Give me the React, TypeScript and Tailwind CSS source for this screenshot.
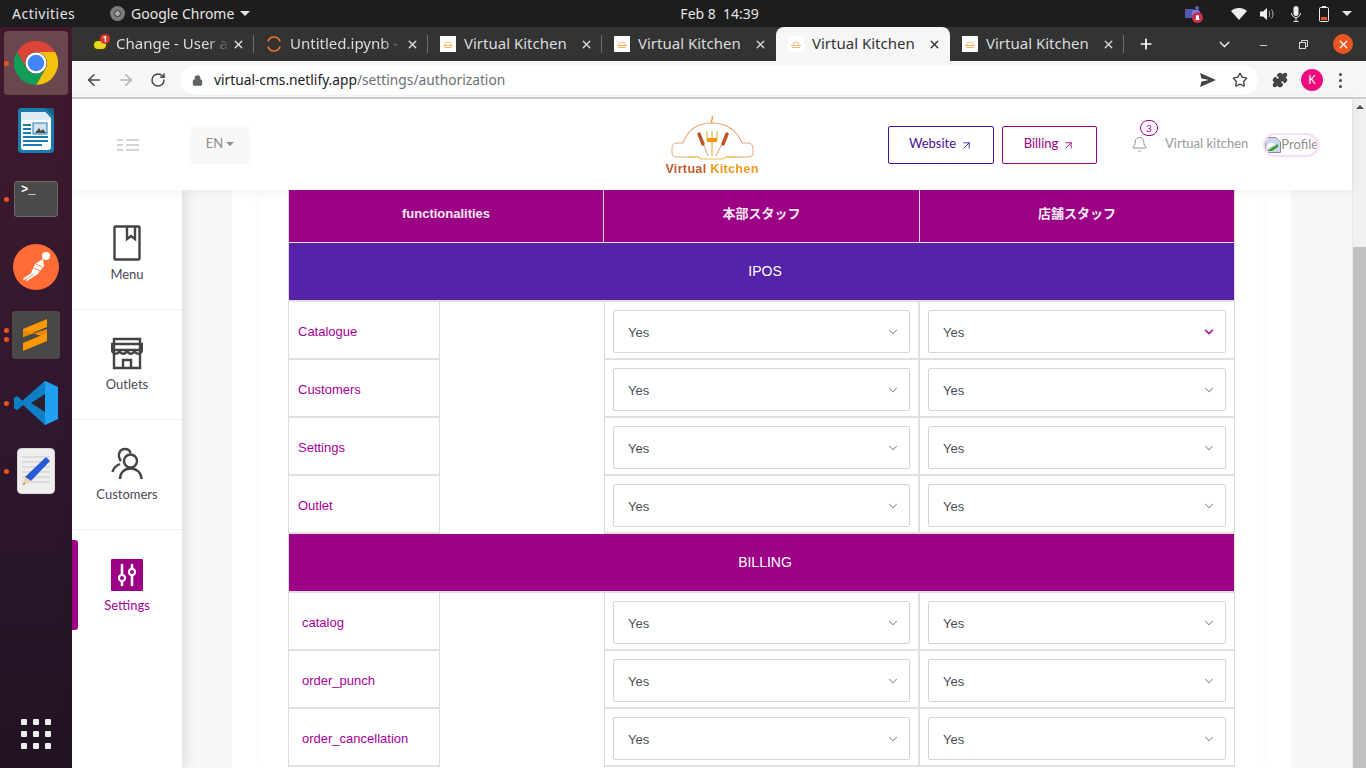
import React from "react";
import { ArrowLeft, ArrowRight, RotateCw, Star, Plus, X, ChevronDown, Minus, Bell, ArrowUpRight, Lock, Puzzle } from "lucide-react";

function ChromeLogo({ size = 44 }: { size?: number }) {
  return (
    <svg width={size} height={size} viewBox="0 0 48 48">
      <path d="M3.2 12A24 24 0 0 1 44.8 12L24 12A12 12 0 0 0 13.6 30Z" fill="#db4437" />
      <path d="M44.8 12A24 24 0 0 1 24 48L34.4 30A12 12 0 0 0 24 12Z" fill="#f4c20d" />
      <path d="M24 48A24 24 0 0 1 3.2 12L13.6 30A12 12 0 0 0 34.4 30Z" fill="#0f9d58" />
      <circle cx="24" cy="24" r="11.5" fill="#fff" />
      <circle cx="24" cy="24" r="9" fill="#4285f4" />
    </svg>
  );
}

function Dot({ top }: { top: number }) {
  return <span className="absolute left-[4px] h-[5px] w-[5px] rounded-full bg-[#e95420]" style={{ top }} />;
}

function Dock() {
  return (
    <div className="flex h-full w-[72px] shrink-0 flex-col items-center bg-gradient-to-b from-[#41192c] via-[#31182f] to-[#211322] pt-[2px]">
      <div className="relative flex h-[68px] w-full items-center justify-center">
        <div className="flex h-[64px] w-[64px] items-center justify-center rounded-[4px] bg-[#6a474e]">
          <ChromeLogo />
        </div>
        <Dot top={32} />
      </div>
      <div className="flex h-[68px] w-full items-center justify-center">
        <svg width="38" height="46" viewBox="0 0 38 46">
          <path d="M4 0H29L37 8V41a4 4 0 0 1-4 4H5a4 4 0 0 1-4-4V3a3 3 0 0 1 3-3Z" fill="#1a7cac" />
          <path d="M4 4H28L34 10V39a3 3 0 0 1-3 3H7a3 3 0 0 1-3-3Z" fill="#fff" />
          <path d="M28 0H34a3 3 0 0 1 3 3V9Z" fill="#14628c" />
          <path d="M4 4H28L32 8V12H4Z" fill="#dcebf3" />
          <rect x="6" y="16" width="8" height="2" fill="#1a7cac" />
          <rect x="6" y="20" width="8" height="2" fill="#1a7cac" />
          <rect x="6" y="24" width="8" height="2" fill="#1a7cac" />
          <rect x="16" y="15" width="14" height="11" fill="#cfe2ee" stroke="#1a7cac" />
          <path d="M18 25l4-5 2 3 2-2 3 4Z" fill="#4b4b4b" />
          <rect x="6" y="28" width="25" height="2" fill="#1a7cac" />
          <rect x="6" y="32" width="25" height="2" fill="#1a7cac" />
          <rect x="6" y="36" width="19" height="2" fill="#1a7cac" />
        </svg>
      </div>
      <div className="relative flex h-[68px] w-full items-center justify-center">
        <div className="h-[36px] w-[44px] rounded-[3px] border border-[#6b6b6b] bg-[#4a4a4a] pl-[6px] pt-[1px] font-['Liberation_Mono',monospace] text-[12px] font-bold leading-[14px] text-white">
          &gt;_
        </div>
        <Dot top={32} />
      </div>
      <div className="flex h-[68px] w-full items-center justify-center">
        <svg width="46" height="46" viewBox="0 0 46 46">
          <circle cx="23" cy="23" r="23" fill="#ff6c37" />
          <circle cx="33" cy="12" r="4" fill="#fff" />
          <path d="M30 15L22 20L18 29L24 31L31 22Z" fill="#fff" />
          <path d="M20 29L11 35M23 30L14 36" stroke="#fff" strokeWidth="2" strokeLinecap="round" />
          <path d="M21 24L27 27M23 20L29 23" stroke="#ff6c37" strokeWidth="0.9" fill="none" />
        </svg>
      </div>
      <div className="relative flex h-[68px] w-full items-center justify-center">
        <div className="flex h-[48px] w-[48px] items-center justify-center rounded-[3px] bg-[#484848]">
          <svg width="26" height="32" viewBox="0 0 26 32">
            <path d="M0 10L24 0V8L0 18Z" fill="#ff9800" />
            <path d="M0 11L24 19V10L0 18Z" fill="#e88a00" />
            <path d="M0 24L24 14V22L0 32Z" fill="#ff9800" />
          </svg>
        </div>
        <Dot top={27} />
        <Dot top={36} />
      </div>
      <div className="relative flex h-[68px] w-full items-center justify-center">
        <svg width="44" height="44" viewBox="0 0 44 44">
          <path d="M31 0L44 6V38L31 44L9 24L3 29L0 27V17L3 15L9 20Z" fill="#0e7fc7" />
          <path d="M31 0L44 6V38L31 44Z" fill="#1fa0f0" />
          <path d="M31 13V31L17 22Z" fill="#2f2030" />
          <path d="M0 27L3 29L31 6V0Z" fill="#0e7fc7" />
        </svg>
        <Dot top={32} />
      </div>
      <div className="relative flex h-[68px] w-full items-center justify-center">
        <svg width="38" height="46" viewBox="0 0 38 46">
          <rect x="0.5" y="0.5" width="37" height="45" rx="4" fill="#eeeeee" stroke="#d5d5d5" />
          <path d="M5 9H33M5 14H33M5 19H33M5 24H33M5 29H33M5 34H33" stroke="#c9c9c9" strokeWidth="1" />
          <path d="M29 9L33 13L14 33L8 29Z" fill="#2a5bd7" />
          <path d="M8 29L14 33L6 37Z" fill="#f2d2a9" />
          <path d="M6 36L8 35L7 37Z" fill="#333" />
        </svg>
        <Dot top={32} />
      </div>
      <div className="mb-[19px] mt-auto grid grid-cols-3 gap-[6px]">
        {Array.from({ length: 9 }).map((_, i) => (
          <span key={i} className="h-[6px] w-[6px] rounded-[1px] bg-[#eeeeee]" />
        ))}
      </div>
    </div>
  );
}

function TopBar() {
  return (
    <div className="flex h-[27px] shrink-0 items-center bg-[#1d1d1d] font-['Noto_Sans',sans-serif] text-[14px] text-[#e6e6e6]">
      <span className="ml-[12px] w-[98px] tracking-[0.5px]">Activities</span>
      <span className="flex h-[15px] w-[15px] items-center justify-center rounded-full bg-[#7b7b7b]">
        <span className="h-[7px] w-[7px] rounded-full border border-[#333] bg-[#aaa]" />
      </span>
      <span className="ml-[6px]">Google Chrome</span>
      <span className="ml-[6px] h-0 w-0 border-x-[5px] border-t-[5px] border-x-transparent border-t-[#e6e6e6]" />
      <span className="ml-[430px] w-[79px] whitespace-nowrap">Feb 8&nbsp; 14:39</span>
      <div className="ml-auto flex items-center pr-[14px]">
        <svg width="18" height="18" viewBox="0 0 18 18" className="mr-[29px]">
          <circle cx="12" cy="3" r="2" fill="#6264a7" />
          <rect x="0" y="4" width="9" height="9" rx="1" fill="#5558af" />
          <rect x="7" y="5" width="8" height="8" rx="3" fill="#7b83eb" />
          <circle cx="12.500" cy="12.500" r="5.500" fill="#c4314b" />
          <path d="M10 15h5l-1-1v-2.500a1.500 1.500 0 0 0-3 0V14Z" fill="#fff" />
        </svg>
        <svg width="16" height="12" viewBox="0 0 16 12" className="mr-[13px] -ml-[1px]">
          <path d="M0 3C4-1 12-1 16 3L8 12Z" fill="#eeeeee" />
        </svg>
        <svg width="15" height="14" viewBox="0 0 15 14" className="mr-[16px]">
          <path d="M0 4.500H3L7 1V13L3 9.500H0Z" fill="#eeeeee" />
          <path d="M9 4C10 6 10 8 9 10M11.500 2.500C13.500 5.500 13.500 8.500 11.500 11.500" stroke="#bbb" fill="none" />
        </svg>
        <svg width="10" height="16" viewBox="0 0 10 16" className="mr-[18px]">
          <rect x="2.500" y="0" width="5" height="10" rx="2.500" fill="#eeeeee" />
          <path d="M0.500 7a4.500 4.500 0 0 0 9 0M5 11.500V15M2.500 15.500H7.500" stroke="#eeeeee" fill="none" />
        </svg>
        <svg width="10" height="16" viewBox="0 0 10 16" className="mr-[13px]">
          <rect x="3" y="0" width="4" height="2" fill="#eeeeee" />
          <rect x="0.500" y="1.500" width="9" height="14" rx="1" fill="none" stroke="#eeeeee" />
          <rect x="2" y="11" width="6" height="3" fill="#e95420" />
        </svg>
        <span className="h-0 w-0 border-x-[5px] border-t-[5px] border-x-transparent border-t-[#e6e6e6]" />
      </div>
    </div>
  );
}

function Favicon() {
  return (
    <span className="flex h-[16px] w-[16px] shrink-0 items-center justify-center bg-white">
      <svg width="12" height="8" viewBox="0 0 12 8">
        <path d="M3 5a3 3 0 0 1 6 0" fill="none" stroke="#eeb48c" strokeWidth="1" />
        <path d="M1 5.500H11M2 7.500H10" stroke="#f5b566" strokeWidth="1" />
      </svg>
    </span>
  );
}

function Tab({ title, icon, active, sep = true, fade }: { title: string; icon: React.ReactNode; active?: boolean; sep?: boolean; fade?: boolean }) {
  return (
    <div className={`relative flex h-[34px] w-[174px] shrink-0 items-center pl-[12px] pr-[9px] ${active ? "rounded-t-[8px] bg-[#f6f6f6] text-[#333]" : "text-[#dcdcdc]"}`}>
      {icon}
      <span className="ml-[8px] w-[114px] overflow-hidden whitespace-nowrap pb-[1px]" style={fade ? { maskImage: "linear-gradient(to right,#000 80%,transparent)", WebkitMaskImage: "linear-gradient(to right,#000 80%,transparent)" } : undefined}>
        {title}
      </span>
      <X size={13} strokeWidth={2.5} className="ml-auto" />
      {sep && <span className="absolute right-0 top-[8px] h-[18px] w-px bg-[#6c6c6c]" />}
    </div>
  );
}

function TabStrip() {
  return (
    <div className="flex h-[34px] shrink-0 items-center bg-[#333333] pl-[8px] font-['Noto_Sans',sans-serif] text-[15px]">
      <Tab
        title="Change - User au"
        fade
        icon={
          <span className="relative h-[16px] w-[16px] shrink-0">
            <span className="absolute left-0 top-[3px] h-[12px] w-[16px] rounded-full border-2 border-[#3c3c10] bg-[#e3d81a]" />
            <span className="absolute right-[-2px] top-[-2px] flex h-[10px] w-[10px] items-center justify-center rounded-full bg-[#e0352b] text-[8px] font-bold leading-none text-white">1</span>
          </span>
        }
      />
      <Tab
        title="Untitled.ipynb -"
        fade
        icon={
          <svg width="16" height="16" viewBox="0 0 16 16" className="shrink-0">
            <path d="M2 5.500C4-.5 12-.5 14 5.500M2 10.500C4 16.500 12 16.500 14 10.500" stroke="#f37726" strokeWidth="1.700" fill="none" />
          </svg>
        }
      />
      <Tab title="Virtual Kitchen" icon={<Favicon />} />
      <Tab title="Virtual Kitchen" icon={<Favicon />} sep={false} />
      <Tab title="Virtual Kitchen" icon={<Favicon />} active sep={false} />
      <Tab title="Virtual Kitchen" icon={<Favicon />} />
      <Plus size={16} strokeWidth={2.6} className="ml-[14px] text-white" />
      <ChevronDown size={17} strokeWidth={2} className="ml-[62px] text-[#dcdcdc]" />
      <Minus size={11} strokeWidth={2} className="ml-[25px] mt-[3px] text-[#dcdcdc]" />
      <svg width="9" height="9" viewBox="0 0 9 9" className="ml-[30px] text-[#dcdcdc]">
        <rect x="0.500" y="2.500" width="6" height="6" fill="none" stroke="currentColor" />
        <path d="M2.500 2V.5H8.500V6.500H7" fill="none" stroke="currentColor" />
      </svg>
      <span className="ml-[25px] flex h-[20px] w-[20px] items-center justify-center rounded-full bg-[#e95420]">
        <X size={13} strokeWidth={2.2} className="text-white" />
      </span>
    </div>
  );
}

function Toolbar() {
  return (
    <div className="flex h-[38px] shrink-0 items-center border-b-2 border-[#cfcfcf] bg-[#f6f6f6] pt-[2px] font-['Noto_Sans',sans-serif] text-[13.75px]">
      <ArrowLeft size={18} strokeWidth={2} className="ml-[13px] text-[#444]" />
      <ArrowRight size={18} strokeWidth={2} className="ml-[14px] text-[#b0b0b0]" />
      <RotateCw size={16} strokeWidth={2.2} className="ml-[15px] text-[#444]" />
      <div className="ml-[14px] flex h-[30px] w-[1078px] items-center rounded-full bg-white pl-[12px]">
        <Lock size={11} strokeWidth={2.5} className="text-[#5f6368]" fill="#5f6368" />
        <span className="ml-[11px] text-[#202124]">virtual-cms.netlify.app</span>
        <span className="text-[#6b6f73]">/settings/authorization</span>
        <svg width="16" height="14" viewBox="0 0 16 14" className="ml-auto mr-[16px] text-[#444]">
          <path d="M0 0L16 7L0 14L1.500 8.500L9 7L1.500 5.500Z" fill="currentColor" />
        </svg>
        <Star size={16} strokeWidth={2} className="mr-[10px] text-[#444]" />
      </div>
      <Puzzle size={16} strokeWidth={2} className="ml-[14px] text-[#444]" fill="#444" />
      <span className="ml-[13px] flex h-[22px] w-[22px] items-center justify-center rounded-full bg-[#ec0a7d] text-[12px] text-white">K</span>
      <span className="ml-[16px] flex flex-col gap-[3px]">
        <span className="h-[3px] w-[3px] rounded-full bg-[#444]" />
        <span className="h-[3px] w-[3px] rounded-full bg-[#444]" />
        <span className="h-[3px] w-[3px] rounded-full bg-[#444]" />
      </span>
    </div>
  );
}

function Logo() {
  return (
    <div className="flex w-[96px] flex-col items-center blur-[0.4px]">
      <svg width="96" height="46" viewBox="0 0 96 46">
        <path d="M48 1c2 3-2 4 0 7" stroke="#eda53a" strokeWidth="1.500" fill="none" />
        <path d="M19 28C24 14 35 8 48 8S72 14 78 28" stroke="#e5a47c" strokeWidth="1.200" fill="none" />
        <path d="M19 28H13C10 28 8 30 8 33V38C8 41 10 42 13 42H35M78 28H84C87 28 89 30 89 33V38C89 41 87 42 84 42H62" stroke="#e5a47c" strokeWidth="1" fill="none" />
        <path d="M24 42H34L37 44H59L62 42H74" stroke="#f2c04e" strokeWidth="1.200" fill="none" />
        <path d="M36 20L44 41M62 20L52 41" stroke="#e0a070" strokeWidth="1" />
        <path d="M35 19L39 29M63 19L59 29" stroke="#b8562a" strokeWidth="3.400" strokeLinecap="round" />
        <path d="M43 16V24C43 28 53 28 53 24V16M48 16V41" stroke="#eda53a" strokeWidth="1.100" fill="none" />
        <path d="M43 23H53V27H43Z" fill="#ef9a1a" />
      </svg>
      <div className="mt-[2px] whitespace-nowrap font-['Liberation_Sans',sans-serif] text-[12.5px] font-bold leading-[13px] tracking-[0.35px]">
        <span className="text-[#c25b2a]">Virtual </span>
        <span className="text-[#ef9a1a]">Kitchen</span>
      </div>
    </div>
  );
}

function Header() {
  return (
    <div className="relative z-20 flex h-[91px] shrink-0 items-center bg-white font-['Lato',sans-serif] shadow-[0_1px_12px_rgba(0,0,0,0.07)]">
      <svg width="22" height="12" viewBox="0 0 22 12" className="ml-[45px] text-[#a8a8a8]">
        <path d="M0 1H6M0 6H6M0 11H6M9 1H22M9 6H22M9 11H22" stroke="currentColor" strokeWidth="1" />
      </svg>
      <div className="ml-[51px] flex h-[38px] w-[60px] items-center justify-center gap-[3px] rounded-[4px] bg-[#f8f8f8] pb-[2px] text-[13px] text-[#8d8d8d]">
        EN
        <span className="h-0 w-0 border-x-[4px] border-t-[4px] border-x-transparent border-t-[#8d8d8d]" />
      </div>
      <div className="ml-[414px] mt-[2px]"><Logo /></div>
      <button className="ml-[128px] flex h-[38px] w-[106px] items-center justify-center gap-[4px] rounded-[2px] border border-[#4a0f9c] pb-[2px] text-[13px] text-[#4a0f9c]">
        Website <ArrowUpRight size={13} strokeWidth={1.6} className="mt-[3px]" />
      </button>
      <button className="ml-[8px] flex h-[38px] w-[95px] items-center justify-center gap-[4px] rounded-[2px] border border-[#9c0085] pb-[2px] text-[13px] text-[#9c0085]">
        Billing <ArrowUpRight size={13} strokeWidth={1.6} className="mt-[3px]" />
      </button>
      <div className="relative ml-[34px]">
        <Bell size={17} strokeWidth={1} className="text-[#666]" />
        <span className="absolute left-[9px] top-[-16px] flex h-[16px] w-[18px] items-center justify-center rounded-full border border-[#a7009a] bg-white text-[10px] text-[#a7009a]">3</span>
      </div>
      <span className="ml-[17px] pb-[2px] text-[13px] text-[#9a9a9a]">Virtual kitchen</span>
      <div className="ml-[15px] flex h-[24px] w-[56px] items-center overflow-hidden rounded-full border-2 border-[#fbdcf6] text-[13px] text-[#8f8f8f]">
        <svg width="16" height="16" viewBox="0 0 16 16" className="shrink-0">
          <path d="M.5.5H11L15.500 5V15.500H.5Z" fill="#c9d7f2" stroke="#8a8a8a" />
          <path d="M2 9C4 5 8 5 10 7L2 12Z" fill="#fff" />
          <path d="M2 14L13 7V10L7 14Z" fill="#3a9d23" />
        </svg>
        <span>Profile</span>
      </div>
    </div>
  );
}

function NavItem({ label, icon, active, last, shift }: { label: string; icon: React.ReactNode; active?: boolean; last?: boolean; shift?: string }) {
  return (
    <div className={`relative flex h-[110px] flex-col items-center justify-center gap-[5px] ${shift ?? ""} ${last ? "" : "border-b border-[#f0f0f0]"}`}>
      {active && <span className="absolute left-0 top-[10px] h-[90px] w-[6px] rounded-r-[3px] bg-[#9c0085]" />}
      {icon}
      <span className={`text-[13px] ${active ? "text-[#a7009a]" : "text-[#4a4a55]"}`}>{label}</span>
    </div>
  );
}

function Sidebar() {
  return (
    <div className="relative z-10 h-full w-[110px] shrink-0 bg-white pt-[10px] font-['Lato',sans-serif] shadow-[2px_0_14px_rgba(0,0,0,0.14)]">
      <NavItem
        label="Menu"
        icon={
          <svg width="28" height="36" viewBox="0 0 28 36" fill="none" stroke="#444" strokeWidth="2.400" className="-mb-[1px] mt-[1px]">
            <rect x="1.500" y="1.500" width="25" height="33" rx="1" />
            <path d="M14 1.500V14L18 11L22 14V1.500" />
          </svg>
        }
      />
      <NavItem
        label="Outlets"
        shift="pt-[2px]"
        icon={
          <svg width="32" height="33" viewBox="0 0 32 33" fill="none" stroke="#444" strokeWidth="2.400">
            <path d="M3 13V31H29V13M3 2H29V13H3ZM1 12C1 18 8 18 8.500 13C9 18 15 18 16 13C17 18 23 18 23.500 13C24 18 31 18 31 12V7H1Z" />
            <path d="M12 31V23H20V31" />
          </svg>
        }
      />
      <NavItem
        label="Customers"
        shift="pt-[2px]"
        icon={
          <svg width="32" height="33" viewBox="0 0 32 33" fill="none" stroke="#444" strokeWidth="2.400">
            <circle cx="19.500" cy="14" r="6.500" />
            <path d="M9 32C9 26 13 21.500 19.500 21.500S30.500 26 30.500 32" />
            <path d="M10 14C6 9 8 2 14 2c3 0 5 2 5.500 4M9 17C4 19 2 23 1.500 25" />
          </svg>
        }
      />
      <NavItem
        label="Settings"
        active
        last
        shift="pt-[5px]"
        icon={
          <svg width="32" height="32" viewBox="0 0 32 32">
            <rect width="32" height="32" rx="1" fill="#9c0085" />
            <path d="M11 6V26M21 6V26" stroke="#fff" strokeWidth="2.600" strokeLinecap="round" />
            <circle cx="11" cy="19" r="3" fill="#9c0085" stroke="#fff" strokeWidth="2" />
            <circle cx="21" cy="13" r="3" fill="#9c0085" stroke="#fff" strokeWidth="2" />
          </svg>
        }
      />
    </div>
  );
}

function SelectBox({ active }: { active?: boolean }) {
  return (
    <div className="flex h-[43px] items-center rounded-[2px] border border-[#d6d6d6] bg-white pl-[14px] pr-[9px] text-[13px] text-[#495057]">
      <span className="pt-[3px]">Yes</span>
      <ChevronDown size={14} strokeWidth={active ? 2.6 : 1.8} className={`ml-auto ${active ? "text-[#a7009a]" : "text-[#8a8a8a]"}`} />
    </div>
  );
}

function Row({ label, indent, active }: { label: string; indent: string; active?: boolean }) {
  return (
    <div className="flex h-[58px] border-b-2 border-[#e0e0e0] bg-white">
      <div className={`flex w-[151px] shrink-0 items-center border-r border-[#dcdcdc] text-[13px] text-[#a7009a] ${indent}`}>
        <span className="pt-[3px]">{label}</span>
      </div>
      <div className="-mb-[2px] h-[58px] w-[165px] shrink-0 border-r border-[#dcdcdc] bg-white" />
      <div className="w-[313px] shrink-0 px-[8px] pt-[8px]">
        <SelectBox />
      </div>
      <div className="w-[316px] shrink-0 border-l-2 border-[#e0e0e0] px-[8px] pt-[8px]">
        <SelectBox active={active} />
      </div>
    </div>
  );
}

function Band({ title, color }: { title: string; color: string }) {
  return (
    <div className={`flex h-[59px] items-center justify-center border-b-2 border-[#e0e0e0] pl-[7px] text-[14px] text-white ${color}`}>
      {title}
    </div>
  );
}

function PermissionTable() {
  return (
    <div className="w-[947px] border-x border-[#dcdcdc] font-['Liberation_Sans',sans-serif]">
      <div className="flex h-[53px] border-b border-[#e6e6e6] bg-[#9c0085] font-['Liberation_Sans','Noto_Sans_CJK_JP',sans-serif] text-[13px] font-bold text-[#f7eaf5]">
        <div className="flex w-[315px] items-center justify-center border-r border-[#e9d0e6] pb-[4px]">functionalities</div>
        <div className="flex w-[316px] items-center justify-center border-r border-[#e9d0e6] pb-[4px]">本部スタッフ</div>
        <div className="flex w-[314px] items-center justify-center pb-[4px]">店舗スタッフ</div>
      </div>
      <Band title="IPOS" color="bg-[#5522a9]" />
      <Row label="Catalogue" indent="pl-[9px]" active />
      <Row label="Customers" indent="pl-[9px]" />
      <Row label="Settings" indent="pl-[9px]" />
      <Row label="Outlet" indent="pl-[9px]" />
      <Band title="BILLING" color="bg-[#9c0085]" />
      <Row label="catalog" indent="pl-[13px]" />
      <Row label="order_punch" indent="pl-[13px]" />
      <Row label="order_cancellation" indent="pl-[13px]" />
    </div>
  );
}

function Scrollbar() {
  return (
    <div className="flex h-full w-[14px] shrink-0 flex-col items-center border-l border-[#e8e8e8] bg-[#f1f1f1]">
      <span className="mt-[6px] h-0 w-0 border-x-[4px] border-b-[4px] border-x-transparent border-b-[#505050]" />
      <div className="mt-[138px] w-[13px] flex-1 bg-[#c1c1c1]" />
    </div>
  );
}

export default function App() {
  return (
    <div className="flex h-[768px] w-[1366px] flex-col overflow-hidden bg-white">
      <TopBar />
      <div className="flex min-h-0 flex-1">
        <Dock />
        <div className="flex min-w-0 flex-1 flex-col">
          <TabStrip />
          <Toolbar />
          <div className="flex min-h-0 flex-1">
            <div className="flex min-w-0 flex-1 flex-col">
              <Header />
              <div className="flex min-h-0 flex-1">
                <Sidebar />
                <div className="min-w-0 flex-1 overflow-hidden bg-[#f8f8f8] pl-[50px]">
                  <div className="h-full w-[1059px] bg-white pl-[28px]">
                    <div className="h-full w-[1003px] bg-white pl-[28px] shadow-[0_0_8px_rgba(0,0,0,0.03)]">
                      <PermissionTable />
                    </div>
                  </div>
                </div>
              </div>
            </div>
            <Scrollbar />
          </div>
        </div>
      </div>
    </div>
  );
}
